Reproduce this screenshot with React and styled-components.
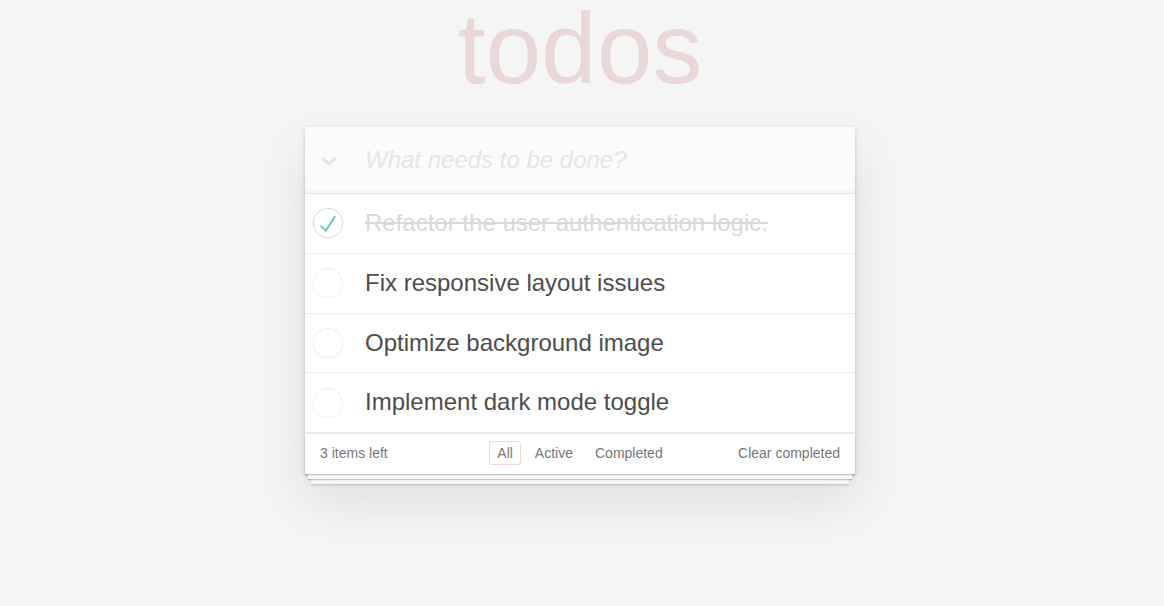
//-----------------IMPORTS---------------
import React from "react";
import styled, { createGlobalStyle } from "styled-components";
//---------------END_IMPORTS---------------

//------------STYLED_COMPONENTS------------
const GlobalStyle = createGlobalStyle`
  html, body {
    margin: 0;
    padding: 0;
    min-height: 100vh;
  }
  body {
    background: #f5f5f5;
    font-family: "Liberation Sans", Arial, Helvetica, sans-serif;
    color: #4d4d4d;
    -webkit-font-smoothing: antialiased;
  }
  * {
    box-sizing: border-box;
  }
`;

const Page = styled.div`
  width: 550px;
  margin: 0 0 0 calc(50% - 277px);
  padding-bottom: 40px;
`;

const MainTitle = styled.h1`
  margin: 0;
  height: 98px;
  font-size: 100px;
  line-height: 96px;
  font-weight: 100;
  text-align: center;
  color: rgba(175, 47, 47, 0.15);
`;

const TodoApp = styled.section`
  margin-top: 29px;
  background: #fff;
  box-shadow: 0 2px 4px 0 rgba(0, 0, 0, 0.2), 0 25px 50px 0 rgba(0, 0, 0, 0.1);
`;

const Header = styled.header`
  display: flex;
  align-items: center;
  height: 66px;
  background: #fbfbfb;
  box-shadow: inset 0 -2px 1px rgba(0, 0, 0, 0.03);
`;

const ToggleAll = styled.span`
  display: flex;
  align-items: center;
  justify-content: center;
  width: 48px;
  margin-top: 2px;
`;

const NewTodo = styled.input`
  flex: 1;
  height: 100%;
  border: none;
  background: transparent;
  padding: 16px 16px 16px 12px;
  font-family: inherit;
  font-size: 24px;
  line-height: 1.4em;
  color: #4d4d4d;
  outline: none;

  &::placeholder {
    font-style: italic;
    font-weight: 300;
    color: #e6e6e6;
  }
`;

const TodoList = styled.ul`
  margin: 0;
  padding: 0;
  list-style: none;
  border-top: 1px solid #e6e6e6;
`;

const TodoItem = styled.li`
  display: flex;
  align-items: center;
  border-bottom: 1px solid #ededed;
`;

const Toggle = styled.span`
  display: flex;
  width: 40px;
  height: 40px;
  flex-shrink: 0;
`;

const Label = styled.label`
  flex: 1;
  padding: 15px 15px 15px 20px;
  font-size: 24px;
  line-height: 1.2;
  word-break: break-all;
  color: ${(p) => (p.$done ? "#d9d9d9" : "#4d4d4d")};
  text-decoration: ${(p) => (p.$done ? "line-through" : "none")};
`;

const Footer = styled.footer`
  display: grid;
  grid-template-columns: 1fr auto 1fr;
  grid-template-rows: 20px;
  align-items: center;
  height: 41px;
  padding: 9px 15px 11px;
  border-top: 1px solid #e6e6e6;
  color: #777;
  font-size: 14px;
  box-shadow: 0 1px 1px rgba(0, 0, 0, 0.2), 0 8px 0 -3px #f6f6f6,
    0 9px 1px -3px rgba(0, 0, 0, 0.2), 0 16px 0 -6px #f6f6f6,
    0 17px 2px -6px rgba(0, 0, 0, 0.2);
`;

const Count = styled.span`
  line-height: 20px;
  margin-top: -1px;
`;

const Filters = styled.ul`
  display: flex;
  margin: -1px 0 0;
  padding: 0;
  list-style: none;
`;

const FilterLink = styled.a`
  display: block;
  margin: 0 3px;
  padding: 3px 7px;
  line-height: 16px;
  border: 1px solid
    ${(p) => (p.$selected ? "rgba(175, 47, 47, 0.2)" : "transparent")};
  border-radius: 3px;
  color: inherit;
  text-decoration: none;
  cursor: pointer;
`;

const ClearButton = styled.button`
  justify-self: end;
  margin: 0;
  padding: 0;
  border: none;
  background: none;
  font-family: inherit;
  font-size: 14px;
  line-height: 20px;
  color: inherit;
  cursor: pointer;
`;
//----------END_STYLED_COMPONENTS----------

//-----------------COMPONENT---------------
const ChevronIcon = () => (
  <svg width="18" height="12" viewBox="0 0 18 12">
    <polyline
      points="2,3 9,9 16,3"
      fill="none"
      stroke="#e4e4e4"
      strokeWidth="3"
      strokeLinejoin="round"
    />
  </svg>
);

const CheckIcon = ({ done }) => (
  <svg width="40" height="40" viewBox="-10 -18 100 135">
    <circle
      cx="50"
      cy="50"
      r="50"
      fill="none"
      stroke={done ? "#bddad5" : "#ededed"}
      strokeWidth="3"
    />
    {done && <path fill="#5dc2af" d="M72 25L42 71 27 56l-4 4 20 20 34-52z" />}
  </svg>
);

const todos = [
  { id: 1, title: "Refactor the user authentication logic.", done: true },
  { id: 2, title: "Fix responsive layout issues", done: false },
  { id: 3, title: "Optimize background image", done: false },
  { id: 4, title: "Implement dark mode toggle", done: false }
];

const App = () => {
  //-----CODE-----
  const left = todos.filter((t) => !t.done).length;
  //---END_CODE---

  //-----RENDER-----
  return (
    <>
      <GlobalStyle />
      <Page>
        <MainTitle>todos</MainTitle>
        <TodoApp>
          <Header>
            <ToggleAll>
              <ChevronIcon />
            </ToggleAll>
            <NewTodo placeholder="What needs to be done?" />
          </Header>
          <TodoList>
            {todos.map((t) => (
              <TodoItem key={t.id}>
                <Toggle>
                  <CheckIcon done={t.done} />
                </Toggle>
                <Label $done={t.done}>{t.title}</Label>
              </TodoItem>
            ))}
          </TodoList>
          <Footer>
            <Count>{left} items left</Count>
            <Filters>
              <li>
                <FilterLink $selected>All</FilterLink>
              </li>
              <li>
                <FilterLink>Active</FilterLink>
              </li>
              <li>
                <FilterLink>Completed</FilterLink>
              </li>
            </Filters>
            <ClearButton>Clear completed</ClearButton>
          </Footer>
        </TodoApp>
      </Page>
    </>
  );
  //---END_RENDER---
};
//---------------END_COMPONENT---------------

export default App;
